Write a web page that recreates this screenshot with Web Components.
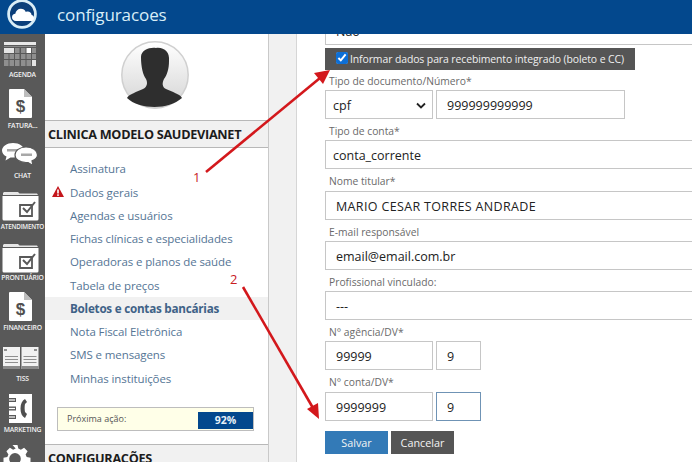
<!DOCTYPE html>
<html>
<head>
<meta charset="utf-8">
<style>
  html, body { margin: 0; height: 100%; overflow: hidden; }
  body { font-family: "Open Sans", "Noto Sans", sans-serif; }
</style>
</head>
<body>
<app-shell>
  <top-bar slot="top" title="configuracoes"></top-bar>
  <icon-rail slot="rail"></icon-rail>
  <side-panel slot="side"></side-panel>
  <account-form slot="main"></account-form>
</app-shell>

<script>
class AppShell extends HTMLElement {
  constructor() {
    super();
    this.attachShadow({ mode: 'open' });
    this.shadowRoot.innerHTML = `
      <style>
        :host { display: flex; flex-direction: column; width: 692px; height: 462px; position: relative; overflow: hidden; }
        .body { flex: 1; display: flex; min-height: 0; }
        .gutter { width: 27px; background: #f1f1f1; border-left: 1px solid #c9c9c9; border-right: 1px solid #d6d6d6; }
        .main { flex: 1; min-width: 0; background: #fff; overflow: hidden; }
        svg { position: absolute; left: 0; top: 0; pointer-events: none; }
        .num { position: absolute; color: #c8201f; font-size: 13px; line-height: 16px; }
      </style>
      <slot name="top"></slot>
      <div class="body">
        <slot name="rail"></slot>
        <slot name="side"></slot>
        <div class="gutter"></div>
        <div class="main"><slot name="main"></slot></div>
      </div>
      <svg width="692" height="462" viewBox="0 0 692 462">
        <g stroke="#d3181c" stroke-width="2.6" fill="#d3181c">
          <line x1="206" y1="172" x2="320" y2="78"/>
          <line x1="243" y1="287" x2="313" y2="408"/>
        </g>
        <polygon points="330,70 323,84 314,73" fill="#d3181c"/>
        <polygon points="319,419 307,409 318,403" fill="#d3181c"/>
      </svg>
      <span class="num" style="left:193px;top:169px">1</span>
      <span class="num" style="left:230px;top:271px">2</span>
    `;
  }
}

class TopBar extends HTMLElement {
  constructor() {
    super();
    this.attachShadow({ mode: 'open' });
  }
  connectedCallback() {
    this.shadowRoot.innerHTML = `
      <style>
        :host { display: flex; align-items: flex-start; height: 34px; flex: none; background: #03488d; overflow: hidden; }
        svg { flex: none; margin: 0 20px 0 7px; }
        span { color: #d8eef8; font-size: 17px; line-height: 30px; letter-spacing: -0.1px; }
      </style>
      <svg width="30" height="34" viewBox="0 0 30 34">
        <circle cx="15" cy="14" r="13.4" fill="#0b3f7a" stroke="#d9edf6" stroke-width="2.8"/>
        <path d="M9 21c-2.600 0-4-1.700-4-3.700 0-2 1.500-3.400 3.300-3.500 .4-3 2.700-5 5.500-5 2.300 0 4.200 1.200 5 3.200 .6-.3 1.300-.4 1.900-.4 2.100 0 3.800 1.500 3.900 3.400 1.200 .3 2.400 1.300 2.400 2.900 0 1.900-1.400 3.100-3.200 3.100z" fill="#fff"/>
      </svg>
      <span>${this.getAttribute('title')}</span>
    `;
  }
}

const RAIL_ICONS = {
  agenda: `<svg width="34" height="25" viewBox="0 0 34 25">
      <rect x="1" y="0" width="32" height="3" fill="#e8e8e8"/>
      <rect x="1" y="4" width="32" height="1" fill="#8a8a8a"/>
      <path d="M1 6h10v5H1z" fill="#e4e4e4"/>
      <g fill="#8f8f8f">
        <rect x="12" y="6" width="4.500" height="5"/><rect x="18" y="6" width="4.500" height="5"/><rect x="29" y="6" width="4" height="5"/>
        <rect x="1" y="12" width="4.500" height="5"/><rect x="6.500" y="12" width="4.500" height="5"/><rect x="12" y="12" width="4.500" height="5"/><rect x="18" y="12" width="4.500" height="5"/><rect x="23.500" y="12" width="4.500" height="5"/><rect x="29" y="12" width="4" height="5"/>
        <rect x="1" y="18" width="4.500" height="6"/><rect x="6.500" y="18" width="4.500" height="6"/><rect x="12" y="18" width="4.500" height="6"/><rect x="18" y="18" width="4.500" height="6"/><rect x="23.500" y="18" width="4.500" height="6"/>
      </g>
      <rect x="23.500" y="6" width="4.500" height="5" fill="#fff"/>
      <rect x="29" y="18" width="4" height="6" fill="#e4e4e4"/>
    </svg>`,
  invoice: `<svg width="23" height="29" viewBox="0 0 23 29">
      <path d="M1 0h14l8 8v20a1 1 0 0 1-1 1H1a1 1 0 0 1-1-1V1a1 1 0 0 1 1-1z" fill="#fff"/>
      <path d="M15 0l8 8h-8z" fill="#bdbdbd"/>
      <text x="11.500" y="23" text-anchor="middle" font-family="Liberation Sans" font-weight="700" font-size="17" fill="#4f4f4f">$</text>
    </svg>`,
  chat: `<svg width="36" height="23" viewBox="0 0 36 23">
      <path d="M11 0C5 0 0 3.500 0 7.500c0 2.600 1.800 4.800 4.500 6l-1 4 5-3h3C17.500 14.500 22 11.500 22 7.500 22 3.500 17.500 0 11 0z" fill="#fff"/>
      <rect x="5" y="6" width="12" height="2.500" fill="#a8a8a8"/>
      <path d="M24 4c-6.500 0-11 3.700-11 8s4.500 7.500 11 7.500h2l5 3-1-4.600c3-1.300 5.500-3.500 5.500-6C35.500 7.700 30.500 4 24 4z" fill="#fff" stroke="#595959" stroke-width="1.200"/>
      <rect x="19" y="10.500" width="11" height="2.500" fill="#a8a8a8"/>
    </svg>`,
  folder: `<svg width="37" height="30" viewBox="0 0 37 30">
      <path d="M1 2 2 1h14l1.500 1.500H35l1 1.500H1z" fill="#e6e6e6"/>
      <path d="M0.500 5h36v23a1.500 1.500 0 0 1-1.500 1.500H2A1.500 1.500 0 0 1 .5 28z" fill="#fff"/>
      <path d="M18 14h12v11H18z" fill="none" stroke="#595959" stroke-width="1.800"/>
      <path d="M21 17l4 4 8-10" fill="none" stroke="#595959" stroke-width="2"/>
    </svg>`,
  book: `<svg width="37" height="22" viewBox="0 0 37 22">
      <rect x="1" y="0" width="17" height="22" fill="#f1f1f1"/><rect x="19.500" y="0" width="17" height="22" fill="#f1f1f1"/>
      <g stroke="#8f8f8f" stroke-width="1">
        <line x1="3" y1="9.500" x2="16" y2="9.500"/><line x1="3" y1="12.500" x2="16" y2="12.500"/><line x1="3" y1="15.500" x2="16" y2="15.500"/>
        <line x1="21.500" y1="9.500" x2="34.500" y2="9.500"/><line x1="21.500" y1="12.500" x2="34.500" y2="12.500"/><line x1="21.500" y1="15.500" x2="34.500" y2="15.500"/>
      </g>
      <rect x="2" y="2" width="3" height="2" fill="#8f8f8f"/><rect x="32" y="2" width="3" height="2" fill="#8f8f8f"/>
      <rect x="1" y="19" width="17" height="3" fill="#8a8a8a"/><rect x="19.500" y="19" width="17" height="3" fill="#8a8a8a"/>
    </svg>`,
  phonebook: `<svg width="24" height="29" viewBox="0 0 24 29">
      <rect x="1" y="0" width="23" height="29" fill="#fff"/>
      <g fill="#595959"><rect x="1" y="4" width="7" height="4"/><rect x="1" y="12.500" width="7" height="4"/><rect x="1" y="21" width="7" height="4"/></g>
      <g fill="#fff"><rect x="1" y="5.400" width="6" height="1.200"/><rect x="1" y="13.900" width="6" height="1.200"/><rect x="1" y="22.400" width="6" height="1.200"/></g>
      <path d="M17 5c-3 1.500-4.500 5-4.500 9.500s1.500 8 4.500 9.500l2-4-2-2c-.5-2.500-.5-5.500 0-8l2-2z" fill="#4f4f4f"/>
    </svg>`,
  gear: `<svg width="36" height="26" viewBox="0 0 36 26">
      <path d="M10.500 0h5l.8 3.600 2.600 1.100 3.200-2 3.500 3.500-2 3.200 1.100 2.600 3.800.8v5l-3.800.8-1.100 2.600 2 3.200-1.200 1.500H5.600l-1.200-1.500 2-3.200-1.100-2.600-3.800-.8v-5l3.800-.8 1.100-2.600-2-3.200 3.500-3.500 3.200 2 2.600-1.100zM13 8a5.800 5.800 0 1 0 0 11.600A5.800 5.800 0 0 0 13 8z" fill="#fff" fill-rule="evenodd"/>
      <circle cx="31" cy="22" r="3.500" fill="#fff"/>
    </svg>`
};

class RailItem extends HTMLElement {
  constructor() {
    super();
    this.attachShadow({ mode: 'open' });
  }
  connectedCallback() {
    const icon = RAIL_ICONS[this.getAttribute('icon')];
    const label = this.getAttribute('label') || '';
    const top = this.getAttribute('top') || 8;
    this.shadowRoot.innerHTML = `
      <style>
        :host { display: flex; flex-direction: column; align-items: center; box-sizing: border-box; height: 50.7px; width: 45px; overflow: hidden; flex: none; padding-top: ${top}px; }
        svg { display: block; flex: none; margin-right: 5px; }
        .label { margin-top: auto; margin-bottom: 1px; height: 10px; line-height: 10px; font-size: var(--fs, 6.800px); font-weight: 600; letter-spacing: -0.200px; color: #f2f2f2; white-space: nowrap; text-align: center; width: 45px; }
      </style>
      ${icon}
      <div class="label">${label}</div>
    `;
  }
}

class IconRail extends HTMLElement {
  constructor() {
    super();
    this.attachShadow({ mode: 'open' });
    this.shadowRoot.innerHTML = `
      <style>
        :host { display: flex; flex-direction: column; width: 45px; flex: none; background: #595959; overflow: hidden; }
        .last { padding: 9px 0 0 2px; }
        .last svg { display: block; }
      </style>
      <rail-item icon="agenda" label="AGENDA" top="8" style="height:47px"></rail-item>
      <rail-item icon="invoice" label="FATURA..." top="8"></rail-item>
      <rail-item icon="chat" label="CHAT" top="11"></rail-item>
      <rail-item icon="folder" label="ATENDIMENTO" top="9" style="--fs:6.300px"></rail-item>
      <rail-item icon="folder" label="PRONTUÁRIO" top="9.500"></rail-item>
      <rail-item icon="invoice" label="FINANCEIRO" top="8"></rail-item>
      <rail-item icon="book" label="TISS" top="12.500"></rail-item>
      <rail-item icon="phonebook" label="MARKETING" top="9"></rail-item>
      <div class="last">${RAIL_ICONS.gear}</div>
    `;
  }
}

class SidePanel extends HTMLElement {
  constructor() {
    super();
    this.attachShadow({ mode: 'open' });
    const items = ['Assinatura', 'Dados gerais', 'Agendas e usuários', 'Fichas clínicas e especialidades',
      'Operadoras e planos de saúde', 'Tabela de preços', 'Boletos e contas bancárias',
      'Nota Fiscal Eletrônica', 'SMS e mensagens', 'Minhas instituições'];
    this.shadowRoot.innerHTML = `
      <style>
        :host { display: block; width: 223px; flex: none; background: #fff; overflow: hidden; }
        .avatar { display: block; margin: 7px 0 0 76px; }
        .head { margin-top: 11px; height: 26px; line-height: 26px; padding-left: 3px; background: #f1f1f1; border-top: 1px solid #b8b8b8; border-bottom: 1px solid #b8b8b8; font-size: 12.700px; font-weight: 700; color: #1c1c1c; white-space: nowrap; letter-spacing: -0.300px; }
        ul { list-style: none; margin: 9.400px 0 0; padding: 0; }
        li { position: relative; height: 23.250px; line-height: 23px; padding-left: 25px; font-size: 11.500px; color: #557595; white-space: nowrap; letter-spacing: -0.100px; }
        li.active { background: #f1f1f1; font-size: 11.700px; font-weight: 700; color: #3f6287; letter-spacing: -0.250px; }
        li svg { position: absolute; left: 7px; top: 5px; }
        .next { display: flex; align-items: stretch; box-sizing: border-box; height: 24px; margin: 17px 14px 0 12px; background: #ffffe8; border: 1px solid #bdbdbd; }
        .next span { flex: 1; padding-left: 9px; font-size: 9px; line-height: 22px; color: #555; }
        .next b { width: 55px; margin: 4px 0 1px; background: #03488d; color: #e8f2f8; font-size: 10.500px; font-weight: 700; line-height: 17px; text-align: center; }
        .head.second { margin-top: 13px; }
      </style>
      <svg class="avatar" width="68" height="68" viewBox="0 0 68 68">
        <defs>
          <linearGradient id="g" x1="0" y1="0" x2="0" y2="1"><stop offset="0" stop-color="#ffffff"/><stop offset="1" stop-color="#d4d4d4"/></linearGradient>
        </defs>
        <circle cx="34" cy="34" r="33.200" fill="url(#g)" stroke="#d0d0d0" stroke-width="1.500"/>
        <path d="M20 16C20 9 29 6 35 7 43 6 49 11 48 20 48 28 46 34 43 38 41 42 41 46 45 48 51 51 59 53 61 57 54 63 44 66 33.500 66 23 66 12 63 6 57 8 53 16 51 22 48 26 46 27 42 25 38 22 34 20 26 20 16Z" fill="#2e2e2e"/>
      </svg>
      <div class="head">CLINICA MODELO SAUDEVIANET</div>
      <ul>
        ${items.map(t => `<li class="${t.startsWith('Boletos') ? 'active' : ''}">${t}${t === 'Dados gerais'
          ? '<svg width="12" height="11" viewBox="0 0 12 11"><path d="M6 0l6 11H0z" fill="#c4161c"/><rect x="5.200" y="3.500" width="1.600" height="4" fill="#fff"/><rect x="5.200" y="8.300" width="1.600" height="1.600" fill="#fff"/></svg>' : ''}</li>`).join('')}
      </ul>
      <div class="next"><span>Próxima ação:</span><b>92%</b></div>
      <div class="head second">CONFIGURAÇÕES</div>
    `;
  }
}

class FormField extends HTMLElement {
  constructor() {
    super();
    this.attachShadow({ mode: 'open' });
    this.shadowRoot.innerHTML = `
      <style>
        :host { display: block; }
        .label { height: 21.300px; padding-left: 4px; font-size: 10.300px; line-height: 25px; color: #6a6a6a; white-space: nowrap; }
        .row { display: flex; gap: 3px; }
      </style>
      <div class="label"></div>
      <div class="row"><slot></slot></div>
    `;
  }
  connectedCallback() {
    this.shadowRoot.querySelector('.label').textContent = this.getAttribute('label');
  }
}

class TextBox extends HTMLElement {
  constructor() {
    super();
    this.attachShadow({ mode: 'open' });
    this.shadowRoot.innerHTML = `
      <style>
        :host { display: flex; align-items: center; box-sizing: border-box; height: 29px; padding: 2px 0 0 10px; background: #fff; border: 1px solid #c6c6c6; font-size: 12.500px; color: #222; white-space: nowrap; overflow: hidden; flex: none; width: 380px; }
        :host([focused]) { border-color: #6f93b5; }
        svg { margin-left: auto; margin-right: 6px; }
      </style>
      <slot></slot>
    `;
  }
  connectedCallback() {
    if (this.hasAttribute('select')) {
      this.shadowRoot.innerHTML += '<svg width="10" height="7" viewBox="0 0 10 7"><path d="M1 1.500l4 4 4-4" fill="none" stroke="#222" stroke-width="1.800"/></svg>';
    }
  }
}

class ActionButton extends HTMLElement {
  constructor() {
    super();
    this.attachShadow({ mode: 'open' });
    this.shadowRoot.innerHTML = `
      <style>
        :host { display: flex; align-items: center; justify-content: center; width: 63px; height: 23px; background: var(--bg, #555); color: #f4f4f4; font-size: 10.800px; }
      </style>
      <slot></slot>
    `;
  }
}

class AccountForm extends HTMLElement {
  constructor() {
    super();
    this.attachShadow({ mode: 'open' });
    this.shadowRoot.innerHTML = `
      <style>
        :host { display: flex; flex-direction: column; align-items: flex-start; padding-left: 28px; margin-top: -18px; }
        form-field { width: 100%; }
        .check { display: flex; align-items: center; gap: 2px; width: 310px; box-sizing: border-box; height: 22px; margin-top: 3px; padding-left: 11px; background: #555; color: #f0f0f0; font-size: 10.450px; line-height: 24px; white-space: nowrap; letter-spacing: -0.100px; }
        input { width: 12px; height: 12px; margin: 0 0 3px 0; accent-color: #0d6fd6; }
        .actions { display: flex; gap: 3px; margin-top: 10px; }
      </style>
      <text-box>Não</text-box>
      <div class="check"><input type="checkbox" checked tabindex="-1"><span>Informar dados para recebimento integrado (boleto e CC)</span></div>
      <form-field label="Tipo de documento/Número*" style="margin-top:-1.300px">
        <text-box select style="width:108px;padding-left:7px">cpf</text-box>
        <text-box style="width:189px">999999999999</text-box>
      </form-field>
      <form-field label="Tipo de conta*"><text-box style="padding-left:7px">conta_corrente</text-box></form-field>
      <form-field label="Nome titular*"><text-box style="letter-spacing:.35px">MARIO CESAR TORRES ANDRADE</text-box></form-field>
      <form-field label="E-mail responsável"><text-box>email@email.com.br</text-box></form-field>
      <form-field label="Profissional vinculado:"><text-box>---</text-box></form-field>
      <form-field label="N° agência/DV*">
        <text-box style="width:108px">99999</text-box>
        <text-box style="width:45px">9</text-box>
      </form-field>
      <form-field label="N° conta/DV*">
        <text-box style="width:108px">9999999</text-box>
        <text-box focused style="width:45px">9</text-box>
      </form-field>
      <div class="actions">
        <action-button style="--bg:#337ab7">Salvar</action-button>
        <action-button>Cancelar</action-button>
      </div>
    `;
  }
}

customElements.define('top-bar', TopBar);
customElements.define('rail-item', RailItem);
customElements.define('icon-rail', IconRail);
customElements.define('side-panel', SidePanel);
customElements.define('form-field', FormField);
customElements.define('text-box', TextBox);
customElements.define('action-button', ActionButton);
customElements.define('account-form', AccountForm);
customElements.define('app-shell', AppShell);
</script>
</body>
</html>
